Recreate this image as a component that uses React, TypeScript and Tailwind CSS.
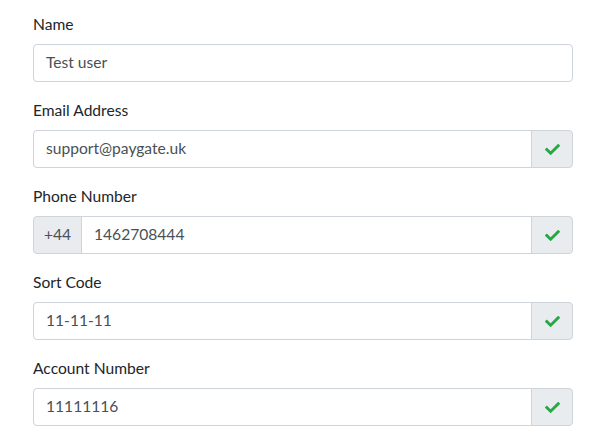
import React from "react";
import { FaCheck } from "react-icons/fa";

const font = { fontFamily: '"Source Sans Pro", Lato, "Noto Sans", sans-serif' };

function Label({ children }: { children: React.ReactNode }) {
  return <div className="text-[15.6px] leading-[24px] text-[#212529] mb-2">{children}</div>;
}

function Check() {
  return (
    <div className="w-[42px] flex items-center justify-center bg-[#e9ecef] border border-[#ced4da] rounded-r-[4px] -ml-px">
      <FaCheck className="text-[#28a745]" size={15} />
    </div>
  );
}

function Field({ label, value, check, prefix }: { label: string; value: string; check?: boolean; prefix?: string }) {
  return (
    <div className="mb-4">
      <Label>{label}</Label>
      <div className="flex h-[38px]">
        {prefix && (
          <div className="w-[49px] flex items-center justify-center bg-[#e9ecef] border border-[#ced4da] rounded-l-[4px] text-[#495057] text-[15.6px]">
            {prefix}
          </div>
        )}
        <div
          className={`flex-1 flex items-center px-3 border border-[#ced4da] bg-white text-[#495057] text-[15.6px] ${
            prefix ? "-ml-px" : "rounded-l-[4px]"
          } ${check ? "" : "rounded-r-[4px]"}`}
        >
          {value}
        </div>
        {check && <Check />}
      </div>
    </div>
  );
}

export default function App() {
  return (
    <div className="w-[600px] h-[441px] bg-white overflow-hidden" style={font}>
      <div className="ml-[33px] w-[540px] pt-3">
        <Field label="Name" value="Test user" />
        <Field label="Email Address" value="support@paygate.uk" check />
        <Field label="Phone Number" value="1462708444" check prefix="+44" />
        <Field label="Sort Code" value="11-11-11" check />
        <Field label="Account Number" value="11111116" check />
      </div>
    </div>
  );
}
